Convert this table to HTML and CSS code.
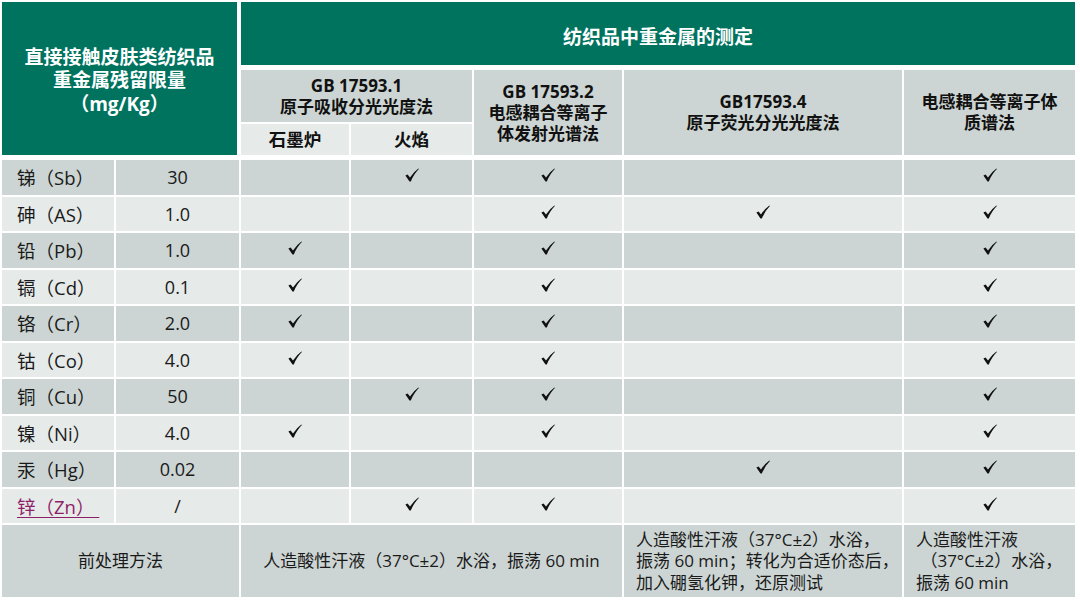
FILE: index.html
```html
<!DOCTYPE html>
<html lang="zh-CN">
<head>
<meta charset="utf-8">
<title>纺织品中重金属的测定</title>
<link rel="stylesheet" href="styles.css">
</head>
<body>
<svg width="0" height="0" class="defs" aria-hidden="true">
  <defs>
    <symbol id="ck" viewBox="0 0 14 14">
      <path d="M0.4 7.6 L2.6 6.4 L5 9.4 Q8.6 3.8 13.4 0.4 L13.9 1.1 Q9.2 5.6 5.8 13.4 L4.5 13.4 Z"/>
    </symbol>
  </defs>
</svg>
<div class="tbl">
  <div class="head">
    <div class="hl">直接接触皮肤类纺织品<br>重金属残留限量<br>（mg/Kg）</div>
    <div class="hr">
      <div class="htop">纺织品中重金属的测定</div>
      <div class="methods">
        <div class="m m1">GB 17593.1<br>原子吸收分光光度法</div>
        <div class="m m2">GB 17593.2<br>电感耦合等离子<br>体发射光谱法</div>
        <div class="m m3">GB17593.4<br>原子荧光分光光度法</div>
        <div class="m m4">电感耦合等离子体<br>质谱法</div>
        <div class="s s1">石墨炉</div>
        <div class="s s2">火焰</div>
      </div>
    </div>
  </div>
  <div class="body">
    <div class="row d"><div class="el">锑（Sb）</div><div class="v">30</div><div></div><div><svg class="ck"><use href="#ck"/></svg></div><div><svg class="ck"><use href="#ck"/></svg></div><div></div><div><svg class="ck"><use href="#ck"/></svg></div></div>
    <div class="row l"><div class="el">砷（AS）</div><div class="v">1.0</div><div></div><div></div><div><svg class="ck"><use href="#ck"/></svg></div><div><svg class="ck"><use href="#ck"/></svg></div><div><svg class="ck"><use href="#ck"/></svg></div></div>
    <div class="row d"><div class="el">铅（Pb）</div><div class="v">1.0</div><div><svg class="ck"><use href="#ck"/></svg></div><div></div><div><svg class="ck"><use href="#ck"/></svg></div><div></div><div><svg class="ck"><use href="#ck"/></svg></div></div>
    <div class="row l"><div class="el">镉（Cd）</div><div class="v">0.1</div><div><svg class="ck"><use href="#ck"/></svg></div><div></div><div><svg class="ck"><use href="#ck"/></svg></div><div></div><div><svg class="ck"><use href="#ck"/></svg></div></div>
    <div class="row d"><div class="el">铬（Cr）</div><div class="v">2.0</div><div><svg class="ck"><use href="#ck"/></svg></div><div></div><div><svg class="ck"><use href="#ck"/></svg></div><div></div><div><svg class="ck"><use href="#ck"/></svg></div></div>
    <div class="row l"><div class="el">钴（Co）</div><div class="v">4.0</div><div><svg class="ck"><use href="#ck"/></svg></div><div></div><div><svg class="ck"><use href="#ck"/></svg></div><div></div><div><svg class="ck"><use href="#ck"/></svg></div></div>
    <div class="row d"><div class="el">铜（Cu）</div><div class="v">50</div><div></div><div><svg class="ck"><use href="#ck"/></svg></div><div><svg class="ck"><use href="#ck"/></svg></div><div></div><div><svg class="ck"><use href="#ck"/></svg></div></div>
    <div class="row l"><div class="el">镍（Ni）</div><div class="v">4.0</div><div><svg class="ck"><use href="#ck"/></svg></div><div></div><div><svg class="ck"><use href="#ck"/></svg></div><div></div><div><svg class="ck"><use href="#ck"/></svg></div></div>
    <div class="row d"><div class="el">汞（Hg）</div><div class="v">0.02</div><div></div><div></div><div></div><div><svg class="ck"><use href="#ck"/></svg></div><div><svg class="ck"><use href="#ck"/></svg></div></div>
    <div class="row l"><div class="el"><span class="link">锌（Zn）&nbsp;</span></div><div class="v">/</div><div></div><div><svg class="ck"><use href="#ck"/></svg></div><div><svg class="ck"><use href="#ck"/></svg></div><div></div><div><svg class="ck"><use href="#ck"/></svg></div></div>
    <div class="row d pre">
      <div class="p1">前处理方法</div>
      <div class="p2">人造酸性汗液（37°C±2）水浴，振荡 60 min</div>
      <div class="p3">人造酸性汗液（37°C±2）水浴，<br>振荡 60 min；转化为合适价态后，<br>加入硼氢化钾，还原测试</div>
      <div class="p4">人造酸性汗液<br>&nbsp;（37°C±2）水浴，<br>振荡 60 min</div>
    </div>
  </div>
</div>
</body>
</html>
```
FILE: styles.css
```css
html, body {
  margin: 0;
  padding: 0;
  background: #ffffff;
}
body {
  font-family: "Open Sans", "Noto Sans CJK SC", sans-serif;
  color: #1a1a1a;
}
.defs {
  position: absolute;
  width: 0;
  height: 0;
  overflow: hidden;
}
.tbl {
  width: 1073px;
  padding: 2px 0 0 2px;
  display: flex;
  flex-direction: column;
  gap: 5px;
}
.head {
  display: flex;
  gap: 4px;
}
.hl {
  width: 235px;
  height: 153px;
  background: #00735f;
  color: #fff;
  font-weight: 700;
  font-size: 19px;
  line-height: 23.5px;
  display: flex;
  align-items: center;
  justify-content: center;
  text-align: center;
  padding-top: 5px;
  box-sizing: border-box;
}
.hr {
  flex: 1;
  display: flex;
  flex-direction: column;
  gap: 5px;
}
.htop {
  height: 63px;
  background: #00735f;
  color: #fff;
  font-weight: 700;
  font-size: 19px;
  display: flex;
  align-items: center;
  justify-content: center;
  padding-top: 4px;
  box-sizing: border-box;
}
.methods {
  display: grid;
  grid-template-columns: 108px 121px 148px 278px 171px;
  grid-template-rows: 52px 31px;
  gap: 2px;
}
.m, .s {
  display: flex;
  align-items: center;
  justify-content: center;
  text-align: center;
  font-weight: 700;
  font-size: 17px;
  line-height: 21px;
  color: #111;
}
.m { background: #ccd5d3; }
.s { background: #e6eae9; font-size: 17.5px; }
.m1 { grid-column: 1 / 3; grid-row: 1; }
.m2 { grid-column: 3; grid-row: 1 / 3; }
.m3 { grid-column: 4; grid-row: 1 / 3; padding-bottom: 2px; }
.m4 { grid-column: 5; grid-row: 1 / 3; padding-bottom: 2px; }
.s1 { grid-column: 1; grid-row: 2; }
.s2 { grid-column: 2; grid-row: 2; }

.body {
  display: grid;
  grid-template-columns: 112px 123px 108px 121px 148px 278px 171px;
  grid-template-rows: repeat(10, 34.5px) 72px;
  gap: 2px;
}
.row { display: contents; }
.row > div {
  display: flex;
  align-items: center;
  justify-content: center;
  font-size: 18px;
}
.row.d > div { background: #ccd5d3; }
.row.l > div { background: #e6eae9; }
.row > div.el {
  justify-content: flex-start;
  padding-left: 15px;
  font-size: 18.5px;
}
.link {
  color: #8e1f66;
  text-decoration: underline;
  text-underline-offset: 3px;
  text-decoration-thickness: 1px;
}
.ck {
  width: 14px;
  height: 14px;
  fill: #111;
  margin-bottom: 4px;
}
.row.pre > div {
  font-size: 17px;
  line-height: 21.5px;
}
.pre .p1 { grid-column: 1 / 3; font-size: 19px; }
.pre .p2 { grid-column: 3 / 6; }
.pre .p3, .pre .p4 {
  justify-content: flex-start;
  padding-left: 12px;
  text-align: left;
}
```
